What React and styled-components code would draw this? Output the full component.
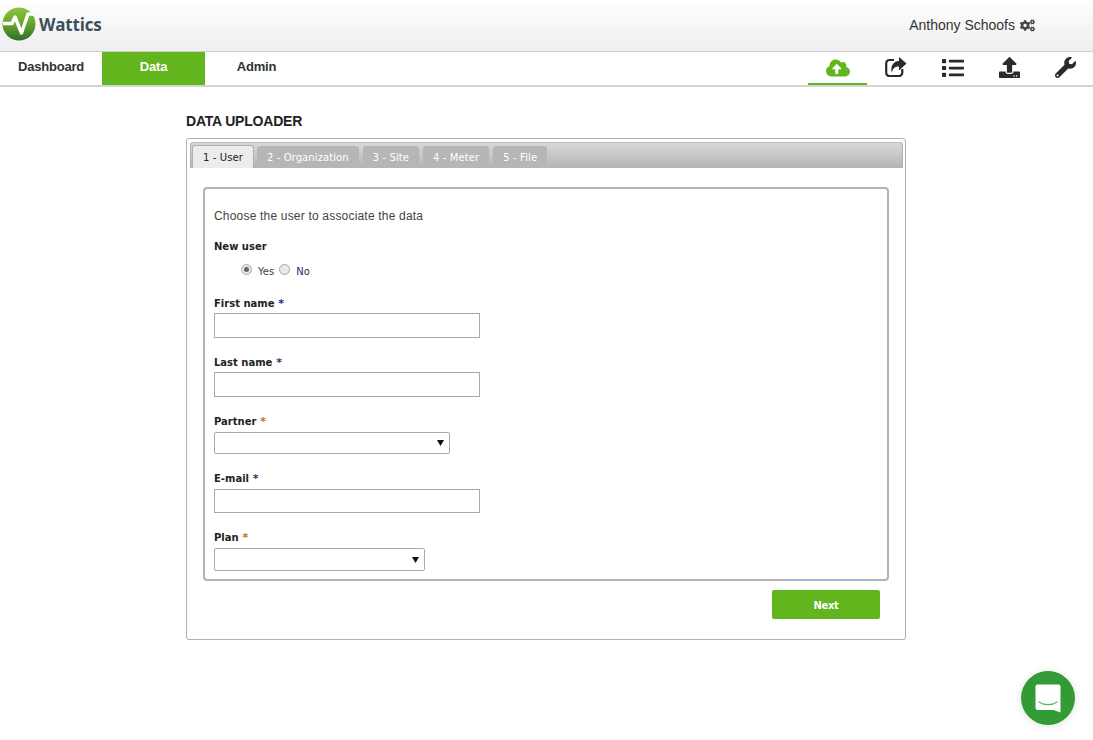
import React from 'react';
import styled, { createGlobalStyle } from 'styled-components';
import { FaCloudUploadAlt, FaList, FaUpload, FaWrench, FaCogs } from 'react-icons/fa';

const Global = createGlobalStyle`
  html, body { margin: 0; padding: 0; background: #fff; }
  body { font-family: "Liberation Sans", Arial, sans-serif; color: #333; }
`;

const Page = styled.div`
  width: 1093px;
  height: 740px;
  overflow: hidden;
  position: relative;
`;
const Header = styled.header`
  height: 51px;
  box-sizing: content-box;
  border-bottom: 1px solid #ccc;
  background: linear-gradient(#fff, #eeeeee);
  display: flex;
  align-items: flex-start;
  justify-content: space-between;
`;
const Brand = styled.div`
  display: flex;
  align-items: center;
  height: 34px;
  padding: 7px 0 0 2px;
`;
const BrandName = styled.span`
  font: bold 17px "Open Sans", "Liberation Sans", sans-serif;
  color: #3d4f58;
  margin-left: 3px;
  letter-spacing: -0.2px;
`;
const User = styled.div`
  display: flex;
  align-items: center;
  gap: 5px;
  font-size: 14px;
  color: #333;
  padding: 17px 58px 0 0;
`;
const Nav = styled.nav`
  height: 33px;
  border-bottom: 2px solid #d4d4d4;
  display: flex;
  justify-content: space-between;
`;
const Tabs = styled.div`
  display: flex;
`;
const NavLink = styled.a`
  width: ${p => p.$w}px;
  height: 33px;
  display: flex;
  align-items: center;
  justify-content: center;
  padding-bottom: 4px;
  box-sizing: border-box;
  font-size: 13px;
  letter-spacing: -0.2px;
  font-weight: bold;
  color: ${p => (p.$active ? '#fff' : '#333')};
  background: ${p => (p.$active ? '#62b51c' : 'transparent')};
`;
const Tools = styled.div`
  display: flex;
`;
const Tool = styled.a`
  width: ${p => p.$w ?? 57}px;
  height: 33px;
  box-sizing: border-box;
  display: flex;
  align-items: flex-start;
  justify-content: center;
  padding-top: ${p => p.$top ?? 5}px;
  color: ${p => (p.$active ? '#62b51c' : '#2b2b2b')};
  border-bottom: 2px solid ${p => (p.$active ? '#62b51c' : 'transparent')};
`;
const Main = styled.main`
  width: 720px;
  margin-left: 186px;
`;
const Title = styled.h1`
  margin: 26px 0 8px;
  font-size: 14px;
  line-height: 17px;
  font-weight: bold;
  letter-spacing: -0.2px;
  color: #222;
`;
const Card = styled.section`
  box-sizing: border-box;
  height: 502px;
  border: 1px solid #b0b0b0;
  border-radius: 3px;
  padding: 3px 2px 0 3px;
`;
const TabStrip = styled.div`
  height: 25px;
  box-sizing: content-box;
  border: 1px solid #b0b0b0;
  border-radius: 3px 3px 0 0;
  border-top-color: #bbb;
  border-bottom: none;
  background: linear-gradient(#d9d9d9, #b4b4b4);
  display: flex;
  padding-left: 1px;
  align-items: flex-end;
`;
const Tab = styled.div`
  height: ${p => (p.$active ? 23 : 22)}px;
  padding: 0 10px;
  margin-right: ${p => p.$gap ?? 4}px;
  ${p => p.$active && 'border: 1px solid #b0b0b0; border-bottom: none;'}
  box-sizing: border-box;
  border-radius: 3px 3px 0 0;
  background: ${p => (p.$active ? '#ececec' : '#b6b6b6')};
  color: ${p => (p.$active ? '#222' : '#fff')};
  font: normal 10px/23px "DejaVu Sans", sans-serif;
  letter-spacing: 0.1px;
`;
const Panel = styled.div`
  box-sizing: border-box;
  width: 686px;
  height: 394px;
  margin: 19px 0 0 13px;
  border: 2px solid #b4b4b4;
  border-radius: 4px;
  padding: 20px 9px 0;
`;
const Intro = styled.p`
  margin: 0 0 18px;
  font-size: 12px;
  line-height: 14px;
  letter-spacing: 0.19px;
  color: #444;
`;
const Field = styled.div`
  display: flex;
  flex-direction: column;
  align-items: flex-start;
  margin-bottom: ${p => p.$mb ?? 19}px;
`;
const Label = styled.label`
  font: bold 10px/12px "DejaVu Sans", sans-serif;
  color: #222;
  margin-bottom: ${p => p.$mb ?? 4}px;
`;
const Star = styled.span`
  color: ${p => p.$c};
  font-weight: bold;
  font-size: 11px;
`;
const Radios = styled.div`
  display: flex;
  align-items: center;
  height: 15px;
  margin: 7px 0 0 27px;
`;
const Radio = styled.span`
  width: 11px;
  height: 11px;
  box-sizing: border-box;
  border-radius: 50%;
  border: 1px solid #a8a8a8;
  background: #e9e9e9;
  display: inline-flex;
  align-items: center;
  justify-content: center;
  margin-top: -4px;
  &::after {
    content: '';
    display: ${p => (p.$on ? 'block' : 'none')};
    width: 5px;
    height: 5px;
    border-radius: 50%;
    background: #666;
  }
`;
const RadioText = styled.span`
  font: 10px "DejaVu Sans", sans-serif;
  color: ${p => p.$c};
  margin: 0 5px 0 6px;
`;
const Input = styled.input`
  box-sizing: border-box;
  width: 266px;
  height: ${p => p.$h ?? 25}px;
  border: 1px solid #a9a9a9;
  background: #fff;
  padding: 0;
  margin: 0;
`;
const SelectBox = styled.div`
  box-sizing: border-box;
  width: ${p => p.$w}px;
  height: ${p => p.$h}px;
  border: 1px solid #a9a9a9;
  border-radius: 2px;
  background: #fff;
  display: flex;
  align-items: center;
  justify-content: flex-end;
  padding: 0 5px 0 0;
`;
const Caret = styled.svg`
  width: 7px;
  height: 6px;
  fill: #111;
`;
const Actions = styled.div`
  display: flex;
  justify-content: flex-end;
  padding: 9px 23px 0 0;
`;
const NextButton = styled.button`
  width: 108px;
  height: 29px;
  border: none;
  border-radius: 2px;
  background: #62b51c;
  color: #fff;
  font: bold 10px "DejaVu Sans", sans-serif;
  letter-spacing: -0.3px;
  padding: 2px 0 0;
`;
const Chat = styled.div`
  position: absolute;
  left: 1021px;
  top: 671px;
  width: 54px;
  height: 54px;
  border-radius: 50%;
  background: #339b36;
  box-shadow: 0 1px 8px rgba(0,0,0,.12);
  display: flex;
  align-items: center;
  justify-content: center;
`;

const Logo = () => (
  <svg width="34" height="34" viewBox="0 0 34 34">
    <defs>
      <linearGradient id="lg" x1="0" y1="0" x2="0" y2="1">
        <stop offset="0" stopColor="#8cc63f" />
        <stop offset="0.55" stopColor="#62a02c" />
        <stop offset="1" stopColor="#2f6d2a" />
      </linearGradient>
    </defs>
    <circle cx="17" cy="17" r="16.5" fill="url(#lg)" />
    <path d="M1 16.5 H10 L13 10 L19.5 26 L26 7 H32" fill="none" stroke="#fff" strokeWidth="3.4" strokeLinejoin="round" />
  </svg>
);

const ShareIcon = () => (
  <svg width="22" height="20" viewBox="0 0 22 20" fill="#2b2b2b">
    <path d="M9 3H4.5A3.2 3.2 0 0 0 1.2 6.2v9.6A3.2 3.2 0 0 0 4.5 19h9.6a3.2 3.2 0 0 0 3.2-3.2V12" fill="none" stroke="#2b2b2b" strokeWidth="2.2" />
    <path d="M14 0 L21.5 6.5 L14 13.5 V9.5 C10 9.5 7.5 11 7 16 C5 10 8 4 14 4 Z" />
  </svg>
);

const Star2 = ({ c }) => <Star $c={c}> *</Star>;

const Select = ({ w, h }) => (
  <SelectBox $w={w} $h={h}>
    <Caret viewBox="0 0 7 6"><path d="M0 0h7L3.5 6z" /></Caret>
  </SelectBox>
);

export default function App() {
  return (
    <Page>
      <Global />
      <Header>
        <Brand>
          <Logo />
          <BrandName>Wattics</BrandName>
        </Brand>
        <User>
          Anthony Schoofs <FaCogs size={15} color="#444" />
        </User>
      </Header>
      <Nav>
        <Tabs>
          <NavLink $w={102}>Dashboard</NavLink>
          <NavLink $w={103} $active>Data</NavLink>
          <NavLink $w={103}>Admin</NavLink>
        </Tabs>
        <Tools>
          <Tool $active $w={59} $top={4}><FaCloudUploadAlt size={24} /></Tool>
          <Tool><ShareIcon /></Tool>
          <Tool><FaList size={22} /></Tool>
          <Tool><FaUpload size={21} /></Tool>
          <Tool $w={55}><FaWrench size={21} /></Tool>
        </Tools>
      </Nav>
      <Main>
        <Title>DATA UPLOADER</Title>
        <Card>
          <TabStrip>
            <Tab $active $gap={3}>1 - User</Tab>
            <Tab>2 - Organization</Tab>
            <Tab>3 - Site</Tab>
            <Tab>4 - Meter</Tab>
            <Tab>5 - File</Tab>
          </TabStrip>
          <Panel>
            <Intro>Choose the user to associate the data</Intro>
            <Field>
              <Label>New user</Label>
              <Radios>
                <Radio $on />
                <RadioText $c="#444">Yes</RadioText>
                <Radio />
                <RadioText $c="#1f2a6b">No</RadioText>
              </Radios>
            </Field>
            <Field>
              <Label $mb={3}>First name<Star2 c="#1f2a9b" /></Label>
              <Input />
            </Field>
            <Field>
              <Label $mb={3}>Last name<Star2 c="#333366" /></Label>
              <Input />
            </Field>
            <Field>
              <Label>Partner<Star2 c="#c87000" /></Label>
              <Select w={236} h={22} />
            </Field>
            <Field>
              <Label>E-mail<Star2 c="#333366" /></Label>
              <Input $h={24} />
            </Field>
            <Field $mb={0}>
              <Label>Plan<Star2 c="#c87000" /></Label>
              <Select w={211} h={23} />
            </Field>
          </Panel>
          <Actions>
            <NextButton>Next</NextButton>
          </Actions>
        </Card>
      </Main>
      <Chat>
        <svg width="26" height="29" viewBox="0 0 26 29">
          <path d="M2.5 0.5h21a2 2 0 0 1 2 2v26l-7-2.5H2.5a2 2 0 0 1-2-2V2.5a2 2 0 0 1 2-2z" fill="#fff" />
          <path d="M4 18c5 3.5 13 3.5 18 0" fill="none" stroke="#5cb060" strokeWidth="1.3" strokeLinecap="round" />
        </svg>
      </Chat>
    </Page>
  );
}
